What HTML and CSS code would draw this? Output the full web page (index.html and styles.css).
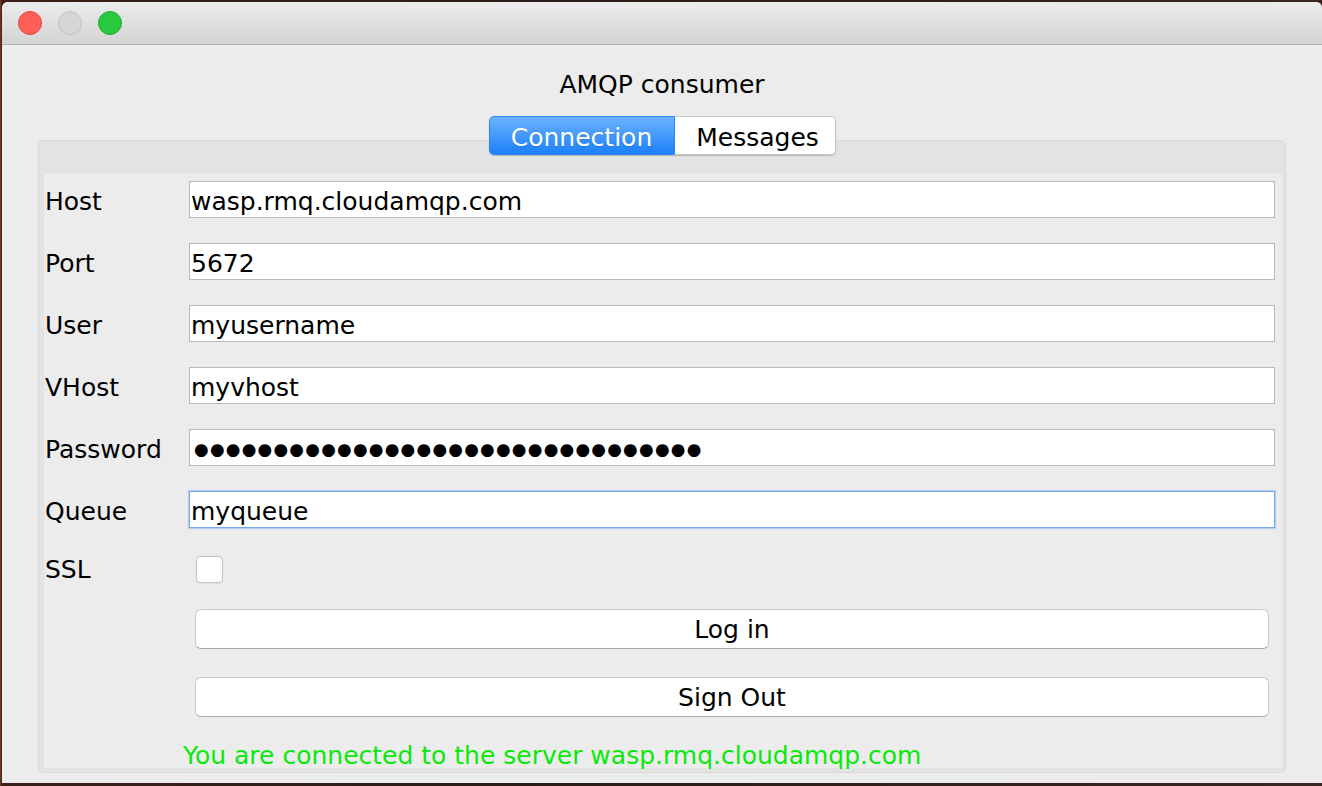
FILE: index.html
```html
<!DOCTYPE html>
<html>
<head>
<meta charset="utf-8">
<link rel="stylesheet" href="styles.css">
</head>
<body>
<div class="window">
  <div class="titlebar">
    <span class="light red"></span>
    <span class="light grey"></span>
    <span class="light green"></span>
  </div>
  <div class="content">
    <div class="app-title">AMQP consumer</div>
    <div class="tabs">
      <div class="tab active">Connection</div>
      <div class="tab">Messages</div>
    </div>
    <div class="panel">
      <div class="inner">
        <div class="row"><div class="label">Host</div><div class="field">wasp.rmq.cloudamqp.com</div></div>
        <div class="row"><div class="label">Port</div><div class="field">5672</div></div>
        <div class="row"><div class="label">User</div><div class="field">myusername</div></div>
        <div class="row"><div class="label">VHost</div><div class="field">myvhost</div></div>
        <div class="row"><div class="label">Password</div><div class="field dots">●●●●●●●●●●●●●●●●●●●●●●●●●●●●●●●●</div></div>
        <div class="row"><div class="label">Queue</div><div class="field focused">myqueue</div></div>
        <div class="row ssl"><div class="label">SSL</div><div class="checkbox"></div></div>
        <div class="button login">Log in</div>
        <div class="button signout">Sign Out</div>
        <div class="status">You are connected to the server wasp.rmq.cloudamqp.com</div>
      </div>
    </div>
  </div>
</div>
</body>
</html>
```
FILE: styles.css
```css
html, body {
  margin: 0;
  padding: 0;
}
body {
  width: 1322px;
  height: 786px;
  overflow: hidden;
  background: linear-gradient(90deg, #7a3a1c 0, #3a2018 2px, #2a1c18 40%, #3a2420 100%);
  font-family: "DejaVu Sans", sans-serif;
  color: #000;
}
.window {
  margin: 2px 0 0 2px;
  width: 1320px;
  height: 781px;
  background: #ececec;
  border-radius: 6px 6px 0 0;
  overflow: hidden;
  display: flex;
  flex-direction: column;
}
.titlebar {
  height: 42px;
  flex: none;
  border-bottom: 1px solid #b2b2b2;
  background: linear-gradient(#ececec, #d4d4d4);
  display: flex;
  align-items: center;
  gap: 16px;
  padding-left: 16px;
}
.light {
  width: 22px;
  height: 22px;
  border-radius: 50%;
  border: 1px solid;
}
.light.red { background: #fe5f57; border-color: #e2463f; }
.light.grey { background: #d6d6d6; border-color: #c2c2c2; }
.light.green { background: #28c940; border-color: #1dad2b; }

.content {
  display: flex;
  flex-direction: column;
  align-items: center;
}
.app-title {
  margin-top: 25px;
  height: 30px;
  line-height: 30px;
  font-size: 25px;
}
.tabs {
  margin-top: 16px;
  margin-bottom: -15px;
  position: relative;
  z-index: 2;
  display: flex;
  height: 39px;
  border-radius: 5px;
  box-shadow: 0 1px 1px rgba(0,0,0,0.2);
}
.tab {
  height: 35px;
  padding-top: 2px;
  line-height: 37px;
  font-size: 25px;
  background: #fff;
  border: 1px solid #c6c6c6;
  border-left: none;
  border-radius: 0 5px 5px 0;
  width: 154px;
  padding-left: 6px;
  text-align: center;
}
.tab.active {
  width: 184px;
  padding-left: 0;
  color: #fff;
  border: 1px solid #2a86f5;
  border-radius: 5px 0 0 5px;
  background: linear-gradient(#6cb2fc, #1b80fa);
  text-shadow: 0 1px 1px rgba(0,0,0,0.15);
}
.panel {
  width: 1238px;
  height: 594px;
  border: 1px solid #d9d9d9;
  border-radius: 5px;
  background: #e3e3e3;
  padding: 33px 3px 4px 5px;
}
.inner {
  height: 594px;
  background: #ececec;
  padding: 7px 7px 0 1px;
  box-sizing: border-box;
}
.row {
  display: flex;
  align-items: center;
  height: 37px;
  margin-bottom: 25px;
}
.label {
  width: 144px;
  flex: none;
  align-self: stretch;
  box-sizing: border-box;
  padding-top: 2px;
  line-height: 37px;
  font-size: 25px;
}
.field {
  flex: 1;
  height: 33px;
  padding-top: 2px;
  line-height: 35px;
  background: #fff;
  border: 1px solid #b8b8b8;
  padding-left: 1px;
  font-size: 25px;
  white-space: nowrap;
  overflow: hidden;
}
.field.dots {
  font-size: 16.8px;
  padding-left: 4px;
  letter-spacing: 1.25px;
}
.field.focused {
  border-color: #79a9e4;
  box-shadow: 0 0 1px 1px #b3cff2;
}
.row.ssl {
  height: 27px;
  margin-top: 28px;
  margin-bottom: 26px;
}
.row.ssl .label {
  padding-top: 0;
  line-height: 27px;
}
.checkbox {
  margin-left: 7px;
  width: 25px;
  height: 25px;
  border: 1px solid #c2c2c2;
  border-radius: 4px;
  background: #fff;
  box-shadow: 0 1px 0 rgba(0,0,0,0.05);
}
.button {
  margin-left: 150px;
  margin-right: 6px;
  height: 37px;
  padding-top: 1px;
  line-height: 38px;
  text-align: center;
  font-size: 25px;
  background: #fff;
  border: 1px solid #c8c8c8;
  border-bottom-color: #a9a9a9;
  border-radius: 6px;
}
.button.login {
  margin-bottom: 28px;
}
.status {
  margin-top: 24px;
  margin-left: 138px;
  height: 30px;
  line-height: 30px;
  font-size: 25px;
  color: #0be80b;
  white-space: nowrap;
}
```
